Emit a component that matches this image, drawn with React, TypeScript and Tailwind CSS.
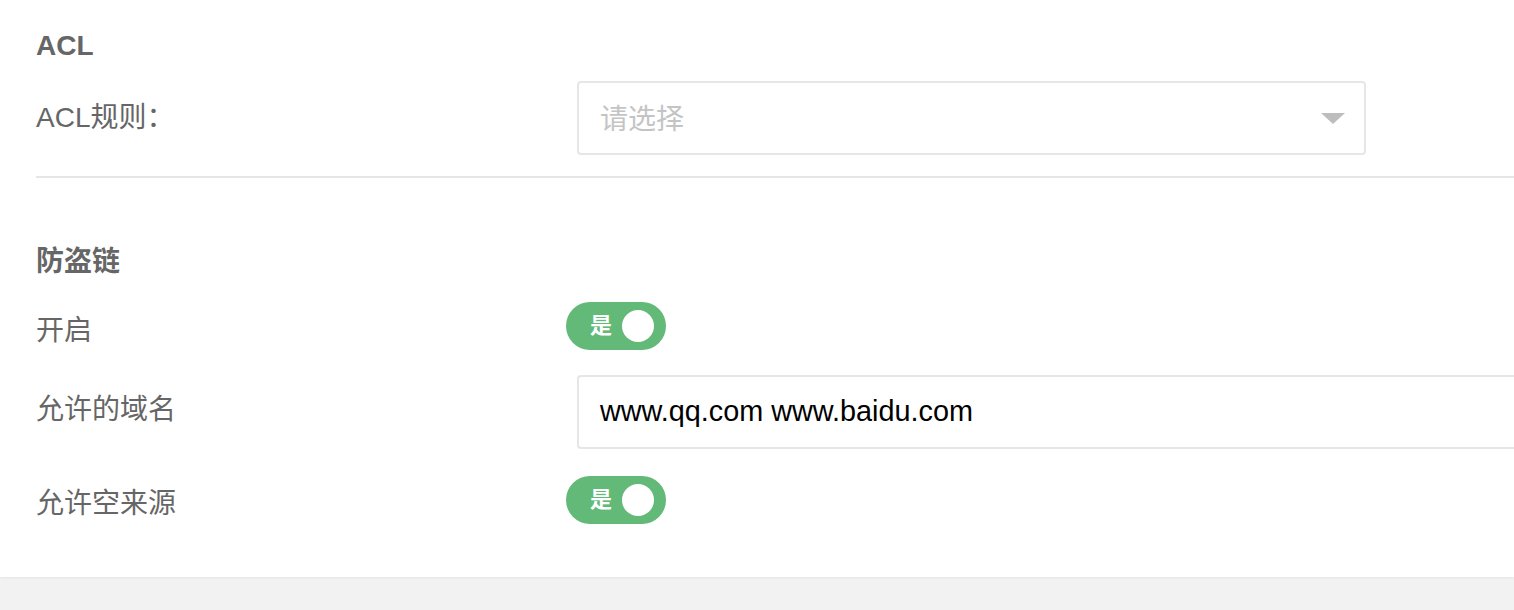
import React from 'react';

const font = { fontFamily: '"Liberation Sans", "Noto Sans CJK SC", sans-serif' };

const Toggle: React.FC<{ label: string }> = ({ label }) => (
  <div className="flex h-[48px] w-[100px] items-center rounded-full bg-[#63b978] pl-[24px] pr-[12px]">
    <span className="text-[22px] font-bold leading-none text-white">{label}</span>
    <span className="ml-auto h-[32px] w-[32px] rounded-full bg-white" />
  </div>
);

const Label: React.FC<{ children: React.ReactNode }> = ({ children }) => (
  <div className="w-[530px] shrink-0 text-[28px] leading-[32px] text-[#666]">{children}</div>
);

export default function App() {
  return (
    <div className="min-h-screen bg-[#f2f2f2]" style={font}>
      <div className="bg-white pl-[36px] pt-[30px] pb-[53px] shadow-[0_1px_3px_rgba(0,0,0,0.06)]">
        {/* ACL */}
        <h2 className="text-[28px] font-bold leading-[32px] text-[#666]">ACL</h2>
        <div className="mt-[19px] flex items-center">
          <Label>ACL规则：</Label>
          <div className="ml-[11px] flex h-[74px] w-[789px] items-center rounded-[4px] border-2 border-[#e6e6e6] pl-[21px] pr-[19px]">
            <span className="relative top-[2px] text-[28px] text-[#c4c4c4]">请选择</span>
            <svg className="ml-auto" width="24" height="11" viewBox="0 0 24 11">
              <path d="M0 0h24L12 11z" fill="#bdbdbd" />
            </svg>
          </div>
        </div>
        <div className="mt-[21px] h-[2px] bg-[#e6e6e6]" />

        {/* 防盗链 */}
        <h2 className="mt-[68px] text-[28px] font-bold leading-[32px] text-[#666]">防盗链</h2>
        <div className="mt-[24px] flex items-center">
          <Label>
            <span className="relative top-[5px]">开启</span>
          </Label>
          <Toggle label="是" />
        </div>
        <div className="mt-[25px] flex items-center">
          <Label>
            <span className="relative top-[-2px]">允许的域名</span>
          </Label>
          <div className="ml-[11px] flex h-[74px] flex-1 items-center rounded-l-[4px] border-2 border-r-0 border-[#e6e6e6] pl-[21px]">
            <span className="text-[28.8px] text-black">www.qq.com www.baidu.com</span>
          </div>
        </div>
        <div className="mt-[27px] flex items-center">
          <Label>
            <span className="relative top-[4px]">允许空来源</span>
          </Label>
          <Toggle label="是" />
        </div>
      </div>
    </div>
  );
}
